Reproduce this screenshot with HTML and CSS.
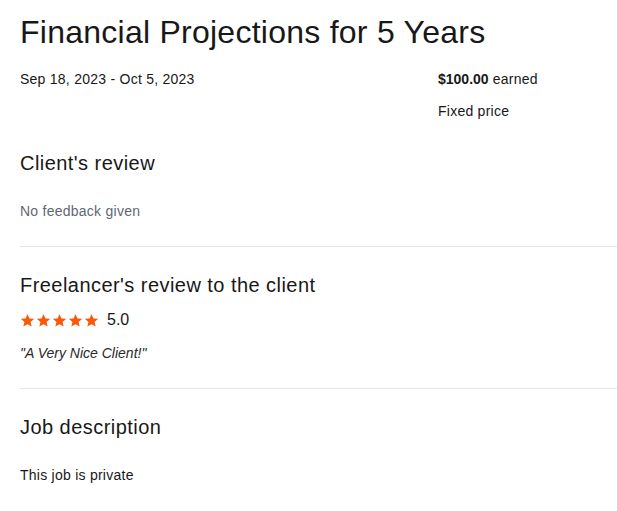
FILE: index.html
```html
<!DOCTYPE html>
<html lang="en">
<head>
    <meta charset="UTF-8">
    <meta name="viewport" content="width=device-width, initial-scale=1.0">
    <title>Financial Projections for 5 Years</title>
    <link rel="stylesheet" href="styles.css">
</head>
<body>
    <div class="job">
        <div class="job-header">
            <h1 class="title">Financial Projections for 5 Years</h1>
            <div class="meta">
                <div class="dates">Sep 18, 2023 - Oct 5, 2023</div>
                <div class="earnings">
                    <div><strong>$100.00</strong> earned</div>
                    <div>Fixed price</div>
                </div>
            </div>
        </div>

        <section class="section">
            <h2 class="section-title">Client's review</h2>
            <p class="muted">No feedback given</p>
        </section>

        <section class="section">
            <h2 class="section-title tight">Freelancer's review to the client</h2>
            <div class="rating">
                <div class="stars">
                    <svg viewBox="0 0 24 24"><path d="M12 1.5l3.1 7.1 7.6.6-5.8 5 1.8 7.5L12 17.8l-6.7 3.9 1.8-7.5-5.8-5 7.6-.6z"/></svg>
                    <svg viewBox="0 0 24 24"><path d="M12 1.5l3.1 7.1 7.6.6-5.8 5 1.8 7.5L12 17.8l-6.7 3.9 1.8-7.5-5.8-5 7.6-.6z"/></svg>
                    <svg viewBox="0 0 24 24"><path d="M12 1.5l3.1 7.1 7.6.6-5.8 5 1.8 7.5L12 17.8l-6.7 3.9 1.8-7.5-5.8-5 7.6-.6z"/></svg>
                    <svg viewBox="0 0 24 24"><path d="M12 1.5l3.1 7.1 7.6.6-5.8 5 1.8 7.5L12 17.8l-6.7 3.9 1.8-7.5-5.8-5 7.6-.6z"/></svg>
                    <svg viewBox="0 0 24 24"><path d="M12 1.5l3.1 7.1 7.6.6-5.8 5 1.8 7.5L12 17.8l-6.7 3.9 1.8-7.5-5.8-5 7.6-.6z"/></svg>
                </div>
                <span class="score">5.0</span>
            </div>
            <p class="quote">"A Very Nice Client!"</p>
        </section>

        <section class="section last">
            <h2 class="section-title">Job description</h2>
            <p>This job is private</p>
        </section>
    </div>
</body>
</html>
```

FILE: styles.css
```css
body {
    font-family: "Liberation Sans", Arial, sans-serif;
    color: #181818;
    background-color: #fff;
    margin: 0;
    padding: 0;
    overflow: hidden;
    letter-spacing: 0.25px;
}

.job {
    margin-left: 20px;
    width: 620px;
}

.job-header {
    padding-top: 12px;
    padding-bottom: 4px;
}

.title {
    font-size: 32px;
    line-height: 40px;
    font-weight: 400;
    margin: 0 0 17px;
    letter-spacing: 0.25px;
}

.meta {
    display: grid;
    grid-template-columns: 418px 1fr;
    font-size: 14px;
    line-height: 20px;
}

.earnings {
    display: flex;
    flex-direction: column;
    gap: 12px;
}

.earnings strong {
    font-weight: 600;
    letter-spacing: 0;
}

.section {
    padding: 24px 0 25px;
    border-bottom: 1px solid #e4e5e9;
}

.section.last {
    border-bottom: none;
}

.section-title {
    font-size: 20px;
    line-height: 28px;
    font-weight: 400;
    margin: 0 0 24px;
    letter-spacing: 0.45px;
}

.section-title.tight {
    margin-bottom: 11px;
}

p {
    margin: 0;
    font-size: 14px;
    line-height: 20px;
}

.muted {
    color: #5f6775;
}

.rating {
    display: flex;
    align-items: center;
    gap: 8px;
    height: 20px;
    margin-bottom: 13px;
}

.stars {
    display: flex;
    gap: 1px;
}

.stars svg {
    width: 15px;
    height: 15px;
    fill: #f65b0a;
}

.score {
    font-size: 16px;
    line-height: 20px;
    letter-spacing: 0;
}

.quote {
    font-style: italic;
    color: #2a2a2a;
    letter-spacing: 0;
}
```
